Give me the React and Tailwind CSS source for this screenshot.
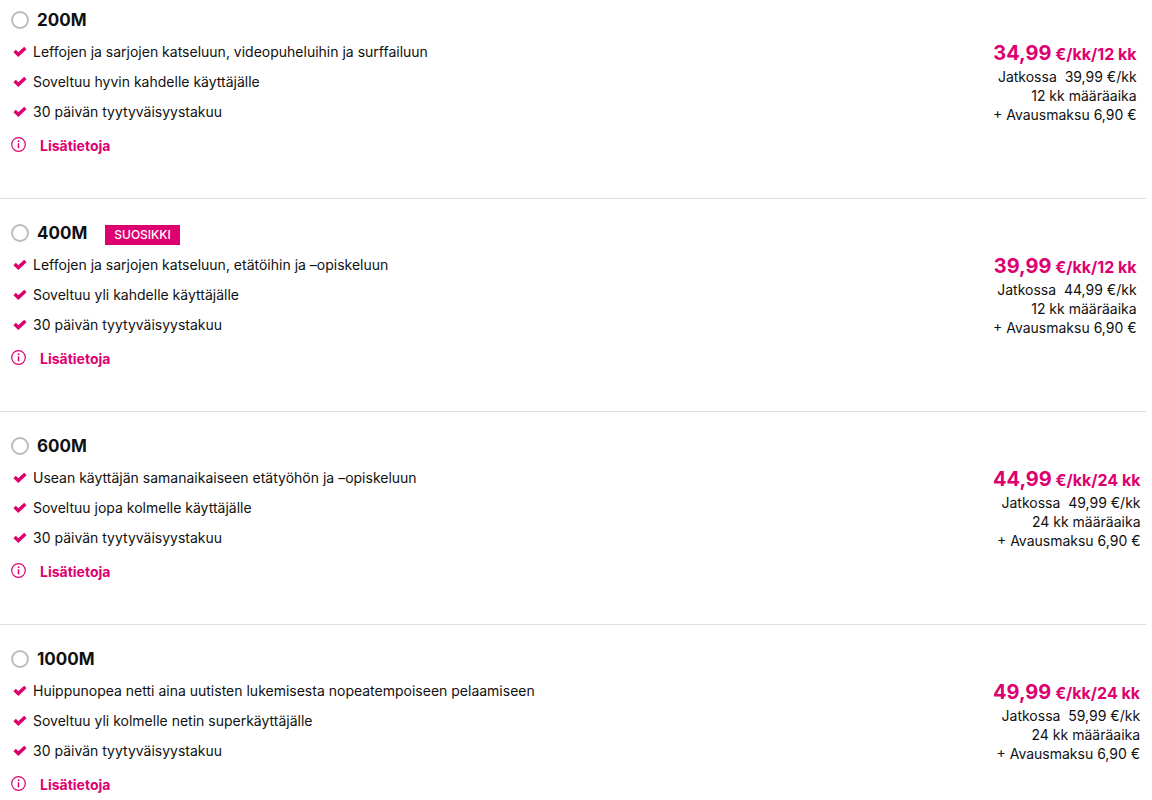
const plans = [
  {
    name: '200M',
    features: ['Leffojen ja sarjojen katseluun, videopuheluihin ja surffailuun', 'Soveltuu hyvin kahdelle käyttäjälle', '30 päivän tyytyväisyystakuu'],
    price: '34,99', term: '12', later: '39,99',
  },
  {
    name: '400M', badge: 'SUOSIKKI',
    features: ['Leffojen ja sarjojen katseluun, etätöihin ja –opiskeluun', 'Soveltuu yli kahdelle käyttäjälle', '30 päivän tyytyväisyystakuu'],
    price: '39,99', term: '12', later: '44,99',
  },
  {
    name: '600M',
    features: ['Usean käyttäjän samanaikaiseen etätyöhön ja –opiskeluun', 'Soveltuu jopa kolmelle käyttäjälle', '30 päivän tyytyväisyystakuu'],
    price: '44,99', term: '24', later: '49,99',
  },
  {
    name: '1000M',
    features: ['Huippunopea netti aina uutisten lukemisesta nopeatempoiseen pelaamiseen', 'Soveltuu yli kolmelle netin superkäyttäjälle', '30 päivän tyytyväisyystakuu'],
    price: '49,99', term: '24', later: '59,99',
  },
];

function Check() {
  return (
    <svg className="h-3 w-3.5 shrink-0" viewBox="0 0 14 12" fill="none" aria-hidden="true">
      <path d="M1.6 5.1 5.3 8.6 12.4 2" stroke="#de0070" strokeWidth="3.4" />
    </svg>
  );
}

function Info() {
  return (
    <svg className="h-[18px] w-[15px] shrink-0" viewBox="0 0 15 18" fill="none" aria-hidden="true">
      <circle cx="7.5" cy="7.5" r="6.8" stroke="#de0070" strokeWidth="1.2" />
      <path d="M7.5 6.2V11.3" stroke="#de0070" strokeWidth="1.5" />
      <circle cx="7.5" cy="4.2" r="0.9" fill="#de0070" />
    </svg>
  );
}

function Plan({ plan }) {
  return (
    <section className="flex justify-between border-b border-[#dedede] pt-5 pb-10 pl-[11px] first:pt-1.5 last:border-b-0">
      <div>
        <div className="flex h-7 items-center">
          <input
            type="radio"
            name="plan"
            id={plan.name}
            className="h-[18px] w-[18px] appearance-none rounded-full border-2 border-[#bcbcbc] bg-white checked:border-[6px] checked:border-[#de0070]"
          />
          <label htmlFor={plan.name} className="pl-2 text-[17px] leading-7 font-bold">{plan.name}</label>
          {plan.badge && (
            <span className="mt-1 ml-[18px] bg-[#de0070] px-[9px] text-xs leading-5 font-medium text-white">{plan.badge}</span>
          )}
        </div>
        <ul className="pt-[3px]">
          {plan.features.map((feature) => (
            <li key={feature} className="flex items-center gap-1.5 pl-0.5 text-sm leading-[30px]">
              <Check />
              <span>{feature}</span>
            </li>
          ))}
        </ul>
        <a href="#lisatietoja" className="mt-[7px] flex w-fit items-center gap-3.5 text-sm leading-6 font-bold text-[#de0070]">
          <Info />
          <span>Lisätietoja</span>
        </a>
      </div>
      <div className="w-[153px] shrink-0 pt-[35px]">
        <div className="w-fit text-right text-sm leading-[19px] whitespace-nowrap">
          <p className="text-base leading-[25px] font-bold text-[#de0070]">
            <span className="text-xl leading-[25px]">{plan.price}</span> €/kk/{plan.term} kk
          </p>
          <p>Jatkossa&nbsp; {plan.later} €/kk</p>
          <p>{plan.term} kk määräaika</p>
          <p>+ Avausmaksu 6,90 €</p>
        </div>
      </div>
    </section>
  );
}

export default function App() {
  return (
    <main className="bg-white pr-1.5 font-['Inter',sans-serif] text-[#111111]">
      {plans.map((plan) => (
        <Plan key={plan.name} plan={plan} />
      ))}
    </main>
  );
}
